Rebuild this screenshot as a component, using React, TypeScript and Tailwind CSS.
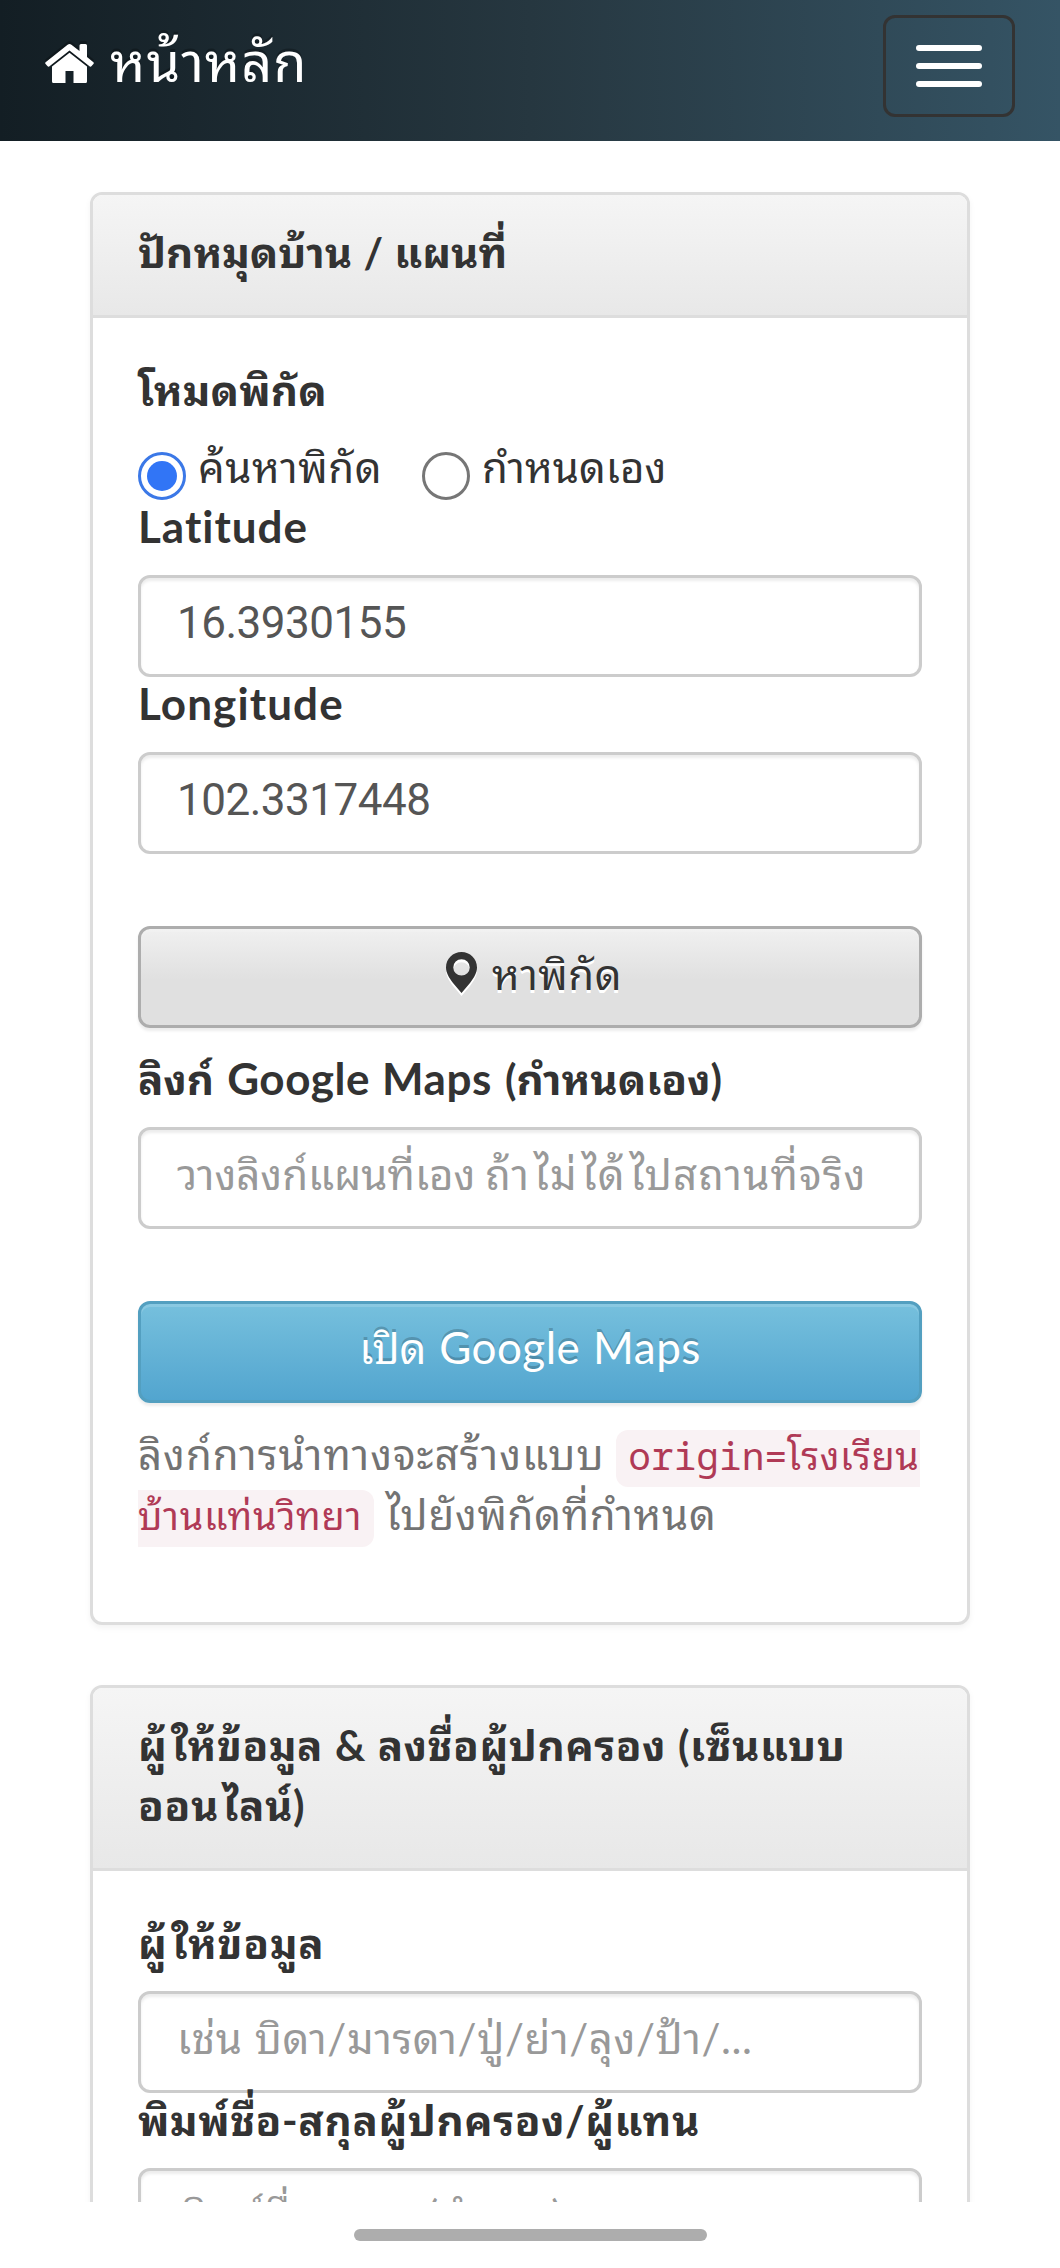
import React from "react";

const HomeIcon = () => (
  <svg
    viewBox="0 0 49 39"
    className="w-[49px] h-[39px] fill-white drop-shadow-[0_-3px_0_rgba(0,0,0,0.25)]"
  >
    <path d="M22.6 .7Q24.5-.6 26.4 .7L34.5 7V1.5Q34.5 0 36 0H40.500Q42 0 42 1.500V13L48.400 18.200Q49.200 19 48.600 19.800L46.400 22.200Q45.600 23 44.800 22.400L24.500 6.600L4.200 22.400Q3.400 23 2.600 22.200L.4 19.800Q-.2 19 .6 18.200Z" />
    <path d="M24.500 8.800L42 22.500V37.500Q42 39 40.500 39H28.500V27H20.500V39H8.500Q7 39 7 37.500V22.500Z" />
  </svg>
);

const PinIcon = () => (
  <svg
    viewBox="0 0 31 41"
    className="w-[31px] h-[41px] fill-[#333] drop-shadow-[0_3px_0_#fff]"
  >
    <path
      fillRule="evenodd"
      d="M15.500 0C24 0 31 6.500 31 15.500C31 21 28 25.500 24 31L15.500 41L7 31C3 25.500 0 21 0 15.500C0 6.500 7 0 15.500 0ZM15.500 7.200A8.200 8.200 0 1 0 15.500 23.600A8.200 8.200 0 1 0 15.500 7.200Z"
    />
  </svg>
);

const Card = ({
  title,
  className,
  children,
}: {
  title: React.ReactNode;
  className: string;
  children: React.ReactNode;
}) => (
  <div
    className={`w-[880px] shrink-0 border-[3px] border-[#ddd] rounded-[12px] bg-white shadow-[0_3px_6px_rgba(0,0,0,0.05)] ${className}`}
  >
    <div className="px-[45px] pt-[27px] pb-[33px] border-b-[3px] border-[#ddd] rounded-t-[9px] bg-linear-to-b from-[#f5f5f5] to-[#e8e8e8] font-bold whitespace-nowrap">
      {title}
    </div>
    <div className="p-[45px]">{children}</div>
  </div>
);

const Label = ({
  className = "",
  children,
}: {
  className?: string;
  children: React.ReactNode;
}) => (
  <label
    className={`block h-[60px] leading-[54px] mb-[15px] font-bold whitespace-nowrap ${className}`}
  >
    {children}
  </label>
);

const Latin = ({ children }: { children: React.ReactNode }) => (
  <span className="text-[44px] leading-none tracking-[0.5px] [word-spacing:1px] [font-variant-ligatures:none]">
    {children}
  </span>
);

// ไ and ใ need a little air on their left side
const Lead = ({ children }: { children: React.ReactNode }) => (
  <span className="ml-[4px]">{children}</span>
);

const Field = ({
  className = "",
  children,
}: {
  className?: string;
  children: React.ReactNode;
}) => (
  <div
    className={`w-full h-[102px] px-[36px] pt-[14px] border-[3px] border-[#ccc] rounded-[12px] bg-white whitespace-nowrap overflow-hidden shadow-[inset_0_3px_3px_rgba(0,0,0,0.075)] ${className}`}
  >
    {children}
  </div>
);

const numberClass =
  "block w-full h-[102px] px-[36px] pb-[6px] border-[3px] border-[#ccc] rounded-[12px] bg-white text-[#555] shadow-[inset_0_3px_3px_rgba(0,0,0,0.075)] font-['Roboto'] text-[44px] tracking-[-0.5px]";

const App = () => {
  return (
    <div className="w-[1060px] h-[2268px] overflow-hidden bg-white text-[#333] text-[42px] leading-[60px] [word-spacing:1px] font-['Lato','Noto_Sans_Thai_Looped',sans-serif]">
      <div className="h-[2202px] overflow-hidden flex flex-col items-center">
        <nav className="w-full h-[141px] shrink-0 px-[45px] flex items-start justify-between bg-linear-to-r from-[#131e24] via-[#263740] to-[#355465]">
          <a className="flex items-start gap-[16px] pt-[32px] text-white text-[54px] leading-[60px] tracking-[0.9px] [text-shadow:0_-3px_0_rgba(0,0,0,0.25)]">
            <span className="mt-[12px]">
              <HomeIcon />
            </span>
            <span>หน้าหลัก</span>
          </a>
          <button className="mt-[15px] w-[132px] h-[102px] border-[3px] border-[#333] rounded-[12px] flex flex-col items-center justify-center gap-[12px]">
            <span className="w-[66px] h-[6px] rounded-[3px] bg-white" />
            <span className="w-[66px] h-[6px] rounded-[3px] bg-white" />
            <span className="w-[66px] h-[6px] rounded-[3px] bg-white" />
          </button>
        </nav>

        <Card className="mt-[51px] h-[1433px]" title="ปักหมุดบ้าน / แผนที่">
          <Label className="tracking-[0.2px]">โหมดพิกัด</Label>
          <div className="flex h-[62px] leading-[58px]">
            <span className="mt-[14px] w-[48px] h-[48px] rounded-full border-[3px] border-[#3b78e7] flex items-center justify-center">
              <span className="w-[30px] h-[30px] rounded-full bg-[#3175f6]" />
            </span>
            <span className="ml-[12px] w-[224px] whitespace-nowrap tracking-[0.5px]">ค้นหาพิกัด</span>
            <span className="mt-[14px] w-[48px] h-[48px] rounded-full border-[3px] border-[#767676]" />
            <span className="ml-[12px] whitespace-nowrap">กำหนดเอง</span>
          </div>
          <Label>
            <span className="text-[44px] leading-none tracking-[1px] [font-variant-ligatures:none]">Latitude</span>
          </Label>
          <input className={numberClass} defaultValue="16.3930155" />
          <Label>
            <span className="text-[44px] leading-none tracking-[1.1px]">Longitude</span>
          </Label>
          <input className={numberClass} defaultValue="102.3317448" />

          <button className="mt-[72px] w-full h-[102px] border-[3px] border-[#adadad] rounded-[12px] flex justify-center gap-[15px] pt-[15px] pl-[8px] tracking-[0.5px] bg-[linear-gradient(to_bottom,#f0f0f0,#e0e0e0_51px)] shadow-[inset_0_3px_0_rgba(255,255,255,0.15),0_3px_3px_rgba(0,0,0,0.075)] [text-shadow:0_3px_0_#fff]">
            <span className="mt-[8px]">
              <PinIcon />
            </span>
            <span>หาพิกัด</span>
          </button>

          <div className="mt-[24px]">
            <Label className="[word-spacing:3px]">
              ลิงก์ <Latin>Google Maps</Latin> (กำหนดเอง)
            </Label>
          </div>
          <Field className="text-[#999] [word-spacing:-1px]">
            วางลิงก์แผนที่เอง{" "}
            <span className="tracking-[1.1px]">
              ถ้า<Lead>ไม่</Lead>
              <Lead>ได้</Lead>
              <Lead>ไป</Lead>สถานที่จริง
            </span>
          </Field>

          <button className="mt-[72px] w-full h-[102px] border-[3px] border-[#539fc0] rounded-[12px] pb-[8px] text-white bg-linear-to-b from-[#76c0dd] to-[#52a5cf] shadow-[inset_0_3px_0_rgba(255,255,255,0.15),0_3px_3px_rgba(0,0,0,0.075)] [text-shadow:0_-3px_0_rgba(0,0,0,0.2)] [word-spacing:2px]">
            เปิด <Latin>Google Maps</Latin>
          </button>

          <p className="mt-[21px] whitespace-nowrap text-[#737373]">
            <span className="tracking-[1px]">ลิงก์การนำทางจะสร้างแบบ</span>{" "}
            <code className="px-[12px] pb-[6px] rounded-[12px] leading-none bg-[#f9f2f4] text-[#b03a56] text-[37.8px] tracking-[0.7px] font-['Noto_Sans_Mono','DejaVu_Sans_Mono','Noto_Sans_Thai_Looped']">
              <span className="tracking-normal">origin=</span>โรงเรียน
              <br />
              บ้านแท่นวิทยา
            </code>{" "}
            <span className="tracking-[0.7px]">ไปยังพิกัดที่กำหนด</span>
          </p>
        </Card>

        <Card
          className="mt-[60px]"
          title={
            <span className="tracking-[0.6px]">
              ผู้<Lead>ให้ข้อมูล</Lead> & ลงชื่อผู้ปกครอง (เซ็นแบบ
              <br />
              ออน<Lead>ไลน์)</Lead>
            </span>
          }
        >
          <Label className="tracking-[0.8px]">
            ผู้<Lead>ให้ข้อมูล</Lead>
          </Label>
          <Field className="text-[#999] tracking-[0.6px]">เช่น บิดา/มารดา/ปู่/ย่า/ลุง/ป้า/...</Field>
          <Label className="tracking-[0.6px]">พิมพ์ชื่อ-สกุลผู้ปกครอง/ผู้แทน</Label>
          <Field className="text-[#999] tracking-[1px] [word-spacing:6px]">พิมพ์ชื่อ-สกุล (สำรอง)</Field>
        </Card>
      </div>

      <div className="h-[66px] pt-[27px] bg-white">
        <div className="mx-auto w-[353px] h-[12px] rounded-[6px] bg-[#adadad]" />
      </div>
    </div>
  );
};

export default App;
